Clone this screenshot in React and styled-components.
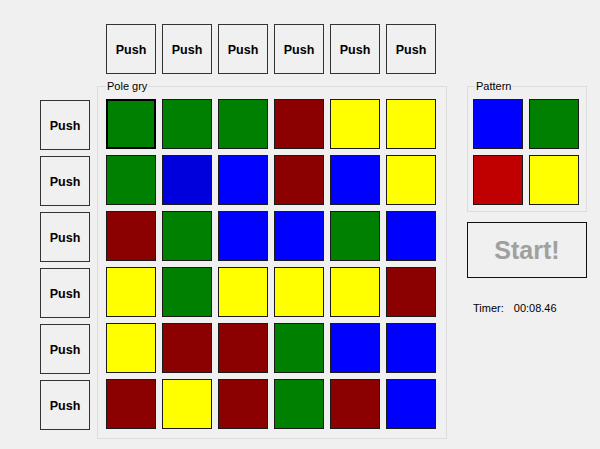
import React from "react";
import styled, { createGlobalStyle } from "styled-components";

const GlobalStyle = createGlobalStyle`
  html, body {
    margin: 0;
    padding: 0;
    background: #f0f0f0;
    font-family: "Liberation Sans", Arial, sans-serif;
  }
`;

const COLORS = {
  g: "#008000",
  r: "#8b0000",
  b: "#0000ff",
  m: "#0000dd",
  y: "#ffff00",
  p: "#c00000",
};

const BOARD = [
  ["g", "g", "g", "r", "y", "y"],
  ["g", "m", "b", "r", "b", "y"],
  ["r", "g", "b", "b", "g", "b"],
  ["y", "g", "y", "y", "y", "r"],
  ["y", "r", "r", "g", "b", "b"],
  ["r", "y", "r", "g", "r", "b"],
];

const PATTERN = ["b", "g", "p", "y"];

const Page = styled.div`
  display: grid;
  grid-template-columns: 50px 350px 133px;
  grid-template-rows: 50px auto;
  column-gap: 7px;
  row-gap: 6px;
  align-items: start;
  padding: 24px 0 0 40px;
  width: 600px;
  height: 449px;
  box-sizing: border-box;
`;

const TopButtons = styled.div`
  grid-column: 2;
  grid-row: 1;
  display: flex;
  gap: 6px;
  padding-left: 9px;
`;

const SideButtons = styled.div`
  grid-column: 1;
  grid-row: 2;
  display: flex;
  flex-direction: column;
  gap: 6px;
  padding-top: 20px;
`;

const PushButton = styled.button`
  width: 50px;
  height: 50px;
  margin: 0;
  padding: 1px 0 0;
  box-sizing: border-box;
  border: 1px solid #333;
  background: #f0f0f0;
  font-family: "Liberation Sans", Arial, sans-serif;
  font-weight: 700;
  font-size: 12.5px;
  color: #000;
`;

const GroupBox = styled.fieldset`
  margin: 0;
  width: 100%;
  box-sizing: border-box;
  border: 1px solid #dcdcdc;
  padding: ${(p) => p.$pad};
  min-width: 0;
`;

const BoardBox = styled(GroupBox)`
  grid-column: 2;
  grid-row: 2;
`;

const Legend = styled.legend`
  padding: 0 1px;
  margin-left: ${(p) => p.$offset || 0}px;
  font-size: 11px;
  line-height: 13px;
  white-space: nowrap;
  color: #000;
`;

const CellGrid = styled.div`
  display: grid;
  grid-template-columns: repeat(${(p) => p.$cols}, 50px);
  grid-auto-rows: 50px;
  gap: 6px;
`;

const Cell = styled.div`
  box-sizing: border-box;
  background: ${(p) => p.$color};
  border: ${(p) => (p.$selected ? "2px solid #000" : "1px solid #1a1a1a")};
`;

const SidePanel = styled.div`
  grid-column: 3;
  grid-row: 2;
  margin-left: 13px;
  display: flex;
  flex-direction: column;
`;

const StartButton = styled.button`
  margin: 10px 0 0;
  height: 56px;
  width: 100%;
  box-sizing: border-box;
  border: 1px solid #111;
  background: #f0f0f0;
  font-family: "Liberation Sans", Arial, sans-serif;
  font-weight: 700;
  font-size: 25px;
  color: #a0a0a0;
`;

const TimerRow = styled.div`
  display: flex;
  gap: 10px;
  margin-top: 24px;
  padding-left: 6px;
  font-size: 11px;
  line-height: 13px;
  color: #000;
`;

export default function App() {
  return (
    <>
      <GlobalStyle />
      <Page>
        <TopButtons>
          {BOARD[0].map((_, i) => (
            <PushButton key={i}>Push</PushButton>
          ))}
        </TopButtons>
        <SideButtons>
          {BOARD.map((_, i) => (
            <PushButton key={i}>Push</PushButton>
          ))}
        </SideButtons>
        <BoardBox $pad="6px 10px 9px 8px">
          <Legend>Pole gry</Legend>
          <CellGrid $cols={6}>
            {BOARD.flatMap((row, r) =>
              row.map((c, i) => (
                <Cell key={`${r}-${i}`} $color={COLORS[c]} $selected={r === 0 && i === 0} />
              ))
            )}
          </CellGrid>
        </BoardBox>
        <SidePanel>
          <GroupBox $pad="6px 7px 6px 5px">
            <Legend $offset={2}>Pattern</Legend>
            <CellGrid $cols={2}>
              {PATTERN.map((c, i) => (
                <Cell key={i} $color={COLORS[c]} />
              ))}
            </CellGrid>
          </GroupBox>
          <StartButton>Start!</StartButton>
          <TimerRow>
            <span>Timer:</span>
            <span>00:08.46</span>
          </TimerRow>
        </SidePanel>
      </Page>
    </>
  );
}
